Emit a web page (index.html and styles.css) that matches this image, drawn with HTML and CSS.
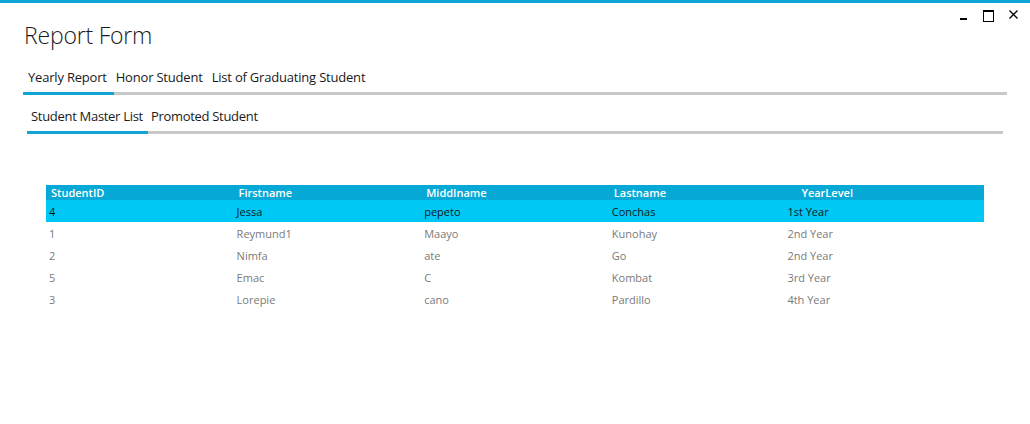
FILE: index.html
```html
<!DOCTYPE html>
<html>
<head>
<meta charset="utf-8">
<link rel="stylesheet" href="styles.css">
</head>
<body>
<div class="window">
  <div class="controls">
    <span class="ctl min"></span>
    <span class="ctl max"></span>
    <span class="ctl close">
      <svg width="9" height="9" viewBox="0 0 9 9"><path d="M0.5 0.5L8.5 8.5M8.5 0.5L0.5 8.5" stroke="#000" stroke-width="1.3"/></svg>
    </span>
  </div>
  <h1 class="title">Report Form</h1>
  <div class="tabs tabs-main">
    <span class="tab active">Yearly Report</span>
    <span class="tab">Honor Student</span>
    <span class="tab">List of Graduating Student</span>
  </div>
  <div class="tabs tabs-sub">
    <span class="tab active">Student Master List</span>
    <span class="tab">Promoted Student</span>
  </div>
  <div class="grid">
    <div class="row head">
      <span>StudentID</span><span>Firstname</span><span>MiddIname</span><span>Lastname</span><span>YearLevel</span>
    </div>
    <div class="row sel">
      <span>4</span><span>Jessa</span><span>pepeto</span><span>Conchas</span><span class="last">1st Year</span>
    </div>
    <div class="row">
      <span>1</span><span>Reymund1</span><span>Maayo</span><span>Kunohay</span><span class="last">2nd Year</span>
    </div>
    <div class="row">
      <span>2</span><span>Nimfa</span><span>ate</span><span>Go</span><span class="last">2nd Year</span>
    </div>
    <div class="row">
      <span>5</span><span>Emac</span><span>C</span><span>Kombat</span><span class="last">3rd Year</span>
    </div>
    <div class="row">
      <span>3</span><span>Lorepie</span><span>cano</span><span>Pardillo</span><span class="last">4th Year</span>
    </div>
  </div>
</div>
</body>
</html>
```
FILE: styles.css
```css
* { box-sizing: border-box; }
html, body { margin: 0; padding: 0; background: #fff; }
body { font-family: "Open Sans", "Noto Sans", sans-serif; width: 1030px; height: 424px; overflow: hidden; }
.window { position: relative; border-top: 3px solid #0ea4d8; height: 424px; }
.controls { position: absolute; top: 7px; right: 0; display: flex; align-items: flex-start; }
.ctl { display: block; height: 12px; position: relative; }
.min { width: 25px; }
.max { width: 26px; }
.close { width: 22px; }
.min::after { content: ""; position: absolute; left: 3px; top: 8px; width: 7px; height: 2px; background: #000; }
.max::after { content: ""; position: absolute; left: 1px; top: 0; width: 9px; height: 9px; border: 1px solid #000; border-top-width: 2px; }
.close svg { position: absolute; left: 1px; top: 0; }
.title { margin: 0; padding: 17px 0 0 24px; font-weight: 300; font-size: 23px; line-height: 30px; color: #1a1a1a; letter-spacing: -0.2px; }
.tabs { display: flex; border-bottom: 3px solid #c8c8c8; font-size: 13px; color: #1a1a1a; }
.tab { margin-bottom: -3px; border-bottom: 3px solid transparent; }
.tab.active { border-bottom-color: #12a6d6; }
.tabs-main { margin: 19px 23px 0 23px; height: 26px; line-height: 16px; }
.tabs-main .tab { padding: 0 7px 0 5px; letter-spacing: -0.2px; }
.tabs-main .tab + .tab { padding-left: 2px; }
.tabs-sub { margin: 13px 27px 0 27px; height: 26px; line-height: 16px; }
.tabs-sub .tab { padding: 0 5px 0 4px; letter-spacing: -0.3px; }
.tabs-sub .tab + .tab { padding-left: 3px; }
.grid { margin: 51px 46px 0 46px; font-size: 11px; }
.row { display: grid; grid-template-columns: repeat(5, 1fr); height: 22px; line-height: 21px; color: #7a7a7a; }
.row span { padding-left: 3px; padding-top: 1px; }
.row .last { margin-left: -12px; }
.row.head { height: 15px; line-height: 14px; background: #06a8d6; color: #fff; font-weight: 600; }
.row.head span { padding-left: 5px; }
.row.sel { background: #00c8f4; color: #0b1a22; }
```
